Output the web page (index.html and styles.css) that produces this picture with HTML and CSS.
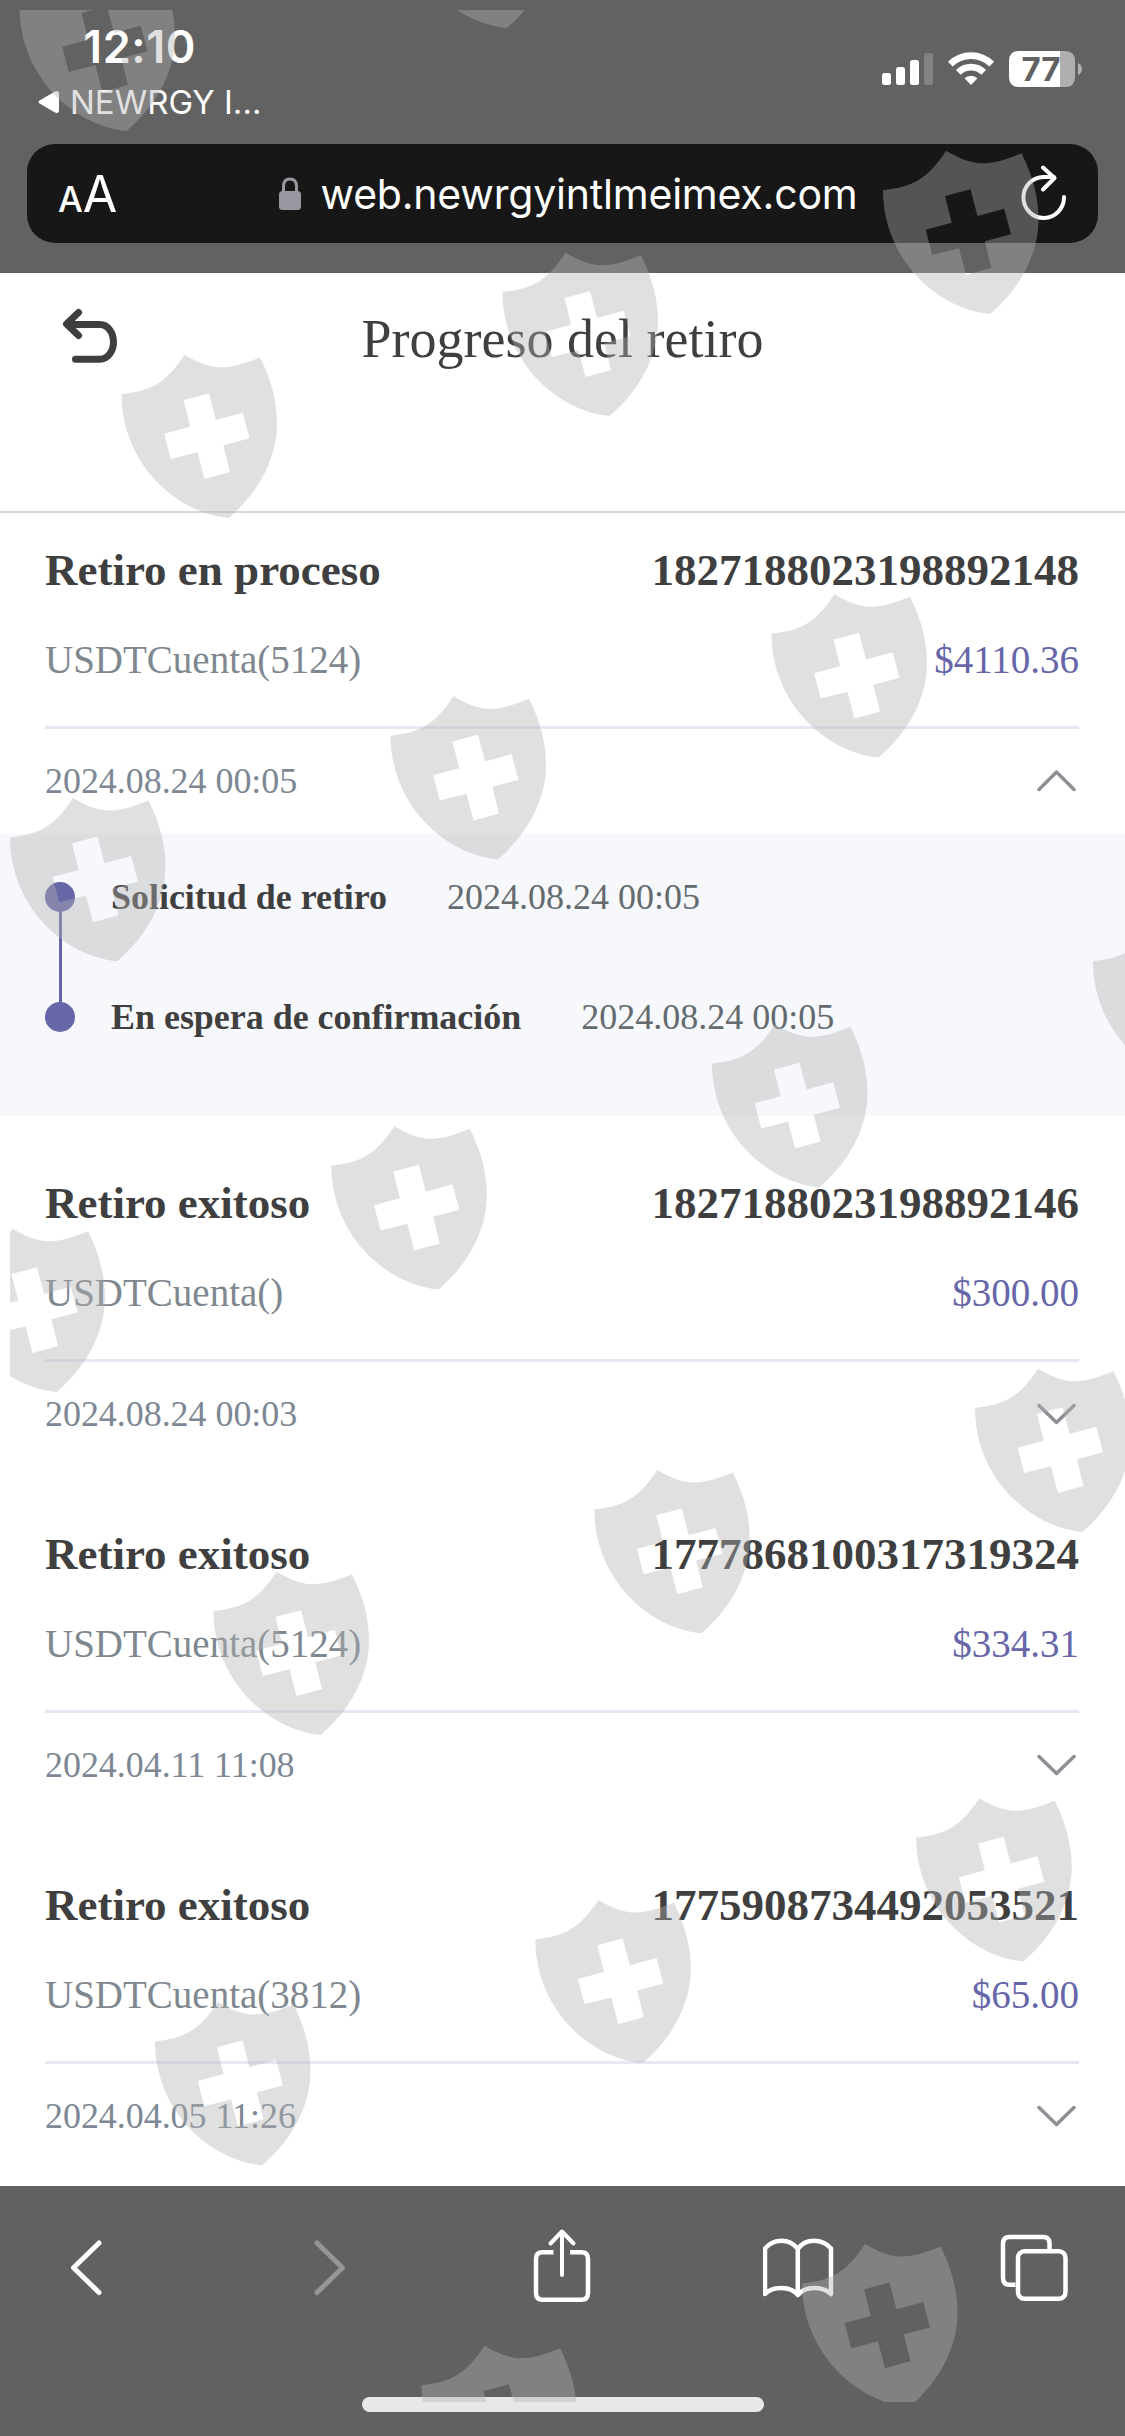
FILE: index.html
```html
<!DOCTYPE html>
<html lang="es">
<head>
<meta charset="utf-8">
<title>Progreso del retiro</title>
<link rel="stylesheet" href="styles.css">
</head>
<body>
<div class="screen">
  <header class="browser-top">
    <div class="status-bar">
      <div class="status-left">
        <div class="clock">12:10</div>
        <div class="back-app">
          <svg class="back-tri" width="21" height="24" viewBox="0 0 21 24"><path d="M2 10.2 17 1.5Q21 0 21 4V20Q21 24 17 22.500L2 13.800Q-1 12 2 10.200Z" fill="#fff"/></svg>
          <span>NEWRGY I...</span>
        </div>
      </div>
      <svg class="status-icons" width="202" height="38" viewBox="881 50 202 38">
        <g fill="#fff">
          <rect x="882" y="73" width="9" height="12" rx="2.500"/>
          <rect x="896" y="67" width="9" height="18" rx="2.500"/>
          <rect x="910" y="60" width="9" height="25" rx="2.500"/>
          <rect x="924" y="53" width="9" height="32" rx="2.500" fill="#828282"/>
          <path d="M971 85 964.500 78.200A9.500 9.500 0 0 1 977.500 78.200Z"/>
        </g>
        <path d="M958.300 72.400A18 18 0 0 1 983.700 72.400M950.300 64.200A29.300 29.300 0 0 1 991.700 64.200" fill="none" stroke="#fff" stroke-width="6.600"/>
        <path d="M1019 51H1060V87H1019Q1009 87 1009 77V61Q1009 51 1019 51Z" fill="#fff"/>
        <path d="M1060 51H1065Q1075 51 1075 61V77Q1075 87 1065 87H1060Z" fill="#b0b0b0"/>
        <path d="M1078 63Q1082 65 1082 69T1078 75Z" fill="#b0b0b0"/>
        <text class="battery-text" x="1041" y="81" text-anchor="middle">77</text>
      </svg>
    </div>
    <div class="url-bar">
      <div class="aa"><span class="aa-small">A</span><span class="aa-big">A</span></div>
      <div class="address">
        <svg width="22" height="34" viewBox="0 0 22 34"><path d="M4.500 15V9.500Q4.500 2 11 2T17.500 9.500V15" fill="none" stroke="#97979f" stroke-width="3"/><rect y="14" width="22" height="19" rx="3.500" fill="#97979f"/></svg>
        <span>web.newrgyintlmeimex.com</span>
      </div>
      <svg class="reload" width="50" height="58" viewBox="1020 164 50 58"><path d="M1064 196A20.300 20.500 0 1 1 1043.500 176H1054M1043 166.500 1054.500 177 1043 188.500" fill="none" stroke="#fff" stroke-width="4" stroke-linecap="round" stroke-linejoin="round"/></svg>
    </div>
  </header>

  <main class="page">
    <div class="page-head">
      <svg class="undo" width="58" height="58" viewBox="61 307 58 58"><path d="M78.500 312.500 66.500 324 78.500 335.500M68 324.500H100A13.500 17.400 0 0 1 100 359.300H75.500" fill="none" stroke="#3f3f3f" stroke-width="7" stroke-linecap="round" stroke-linejoin="round"/></svg>
      <h1>Progreso del retiro</h1>
    </div>

    <section class="card card-first">
      <div class="row row-title"><span>Retiro en proceso</span><span>1827188023198892148</span></div>
      <div class="row row-account"><span>USDTCuenta(5124)</span><span class="amount">$4110.36</span></div>
      <div class="row row-date"><span>2024.08.24 00:05</span><svg class="chev" width="40" height="24" viewBox="0 0 40 24"><path d="M3 20.500 20.500 3 38 20.500"/></svg></div>
    </section>
    <div class="timeline">
      <div class="step step-linked"><i class="dot"></i><strong>Solicitud de retiro</strong><span>2024.08.24 00:05</span></div>
      <div class="step"><i class="dot"></i><strong>En espera de confirmación</strong><span>2024.08.24 00:05</span></div>
    </div>

    <section class="card">
      <div class="row row-title"><span>Retiro exitoso</span><span>1827188023198892146</span></div>
      <div class="row row-account"><span>USDTCuenta()</span><span class="amount">$300.00</span></div>
      <div class="row row-date"><span>2024.08.24 00:03</span><svg class="chev" width="40" height="24" viewBox="0 0 40 24"><path d="M3 3.500 20.500 20.500 38 3.500"/></svg></div>
    </section>
    <section class="card">
      <div class="row row-title"><span>Retiro exitoso</span><span>1777868100317319324</span></div>
      <div class="row row-account"><span>USDTCuenta(5124)</span><span class="amount">$334.31</span></div>
      <div class="row row-date"><span>2024.04.11 11:08</span><svg class="chev" width="40" height="24" viewBox="0 0 40 24"><path d="M3 3.500 20.500 20.500 38 3.500"/></svg></div>
    </section>
    <section class="card">
      <div class="row row-title"><span>Retiro exitoso</span><span>1775908734492053521</span></div>
      <div class="row row-account"><span>USDTCuenta(3812)</span><span class="amount">$65.00</span></div>
      <div class="row row-date"><span>2024.04.05 11:26</span><svg class="chev" width="40" height="24" viewBox="0 0 40 24"><path d="M3 3.500 20.500 20.500 38 3.500"/></svg></div>
    </section>
  </main>

  <footer class="browser-bottom">
    <nav class="toolbar">
      <svg width="72" height="80" viewBox="55.500 2228 72 80"><path d="M99.500 2243 74 2267.700 99.500 2292.500" stroke-width="5"/></svg>
      <svg width="72" height="80" viewBox="291.500 2228 72 80"><path d="M317.500 2243 343 2267.700 317.500 2292.500" stroke-width="5" stroke="#969696"/></svg>
      <svg width="72" height="80" viewBox="527.500 2228 72 80"><path d="M554 2252.300H543Q536.500 2252.300 536.500 2259V2293Q536.500 2299.700 543 2299.700H582Q588.500 2299.700 588.500 2293V2259Q588.500 2252.300 582 2252.300H570.500" stroke-linecap="butt"/><path d="M562.500 2275V2232M551 2243.500 562.500 2231.500 574 2243.500" stroke-width="4"/></svg>
      <svg width="72" height="80" viewBox="763.500 2228 72 80"><path d="M798.300 2249Q792 2240.700 782 2240.700T765.500 2248.500V2294Q771 2288 782 2288T798.300 2295Q804 2288 814.500 2288T831.500 2294V2248.500Q825 2240.700 814.500 2240.700T798.300 2249V2294"/></svg>
      <svg width="72" height="80" viewBox="999.500 2228 72 80"><path d="M1016 2284.700H1010Q1003.500 2284.700 1003.500 2278V2243.500Q1003.500 2237 1010 2237H1043.500Q1050 2237 1050 2243.500V2249" stroke-linecap="butt"/><rect x="1018.500" y="2251.300" width="47.500" height="47.500" rx="6.500"/></svg>
    </nav>
    <div class="home-indicator"></div>
  </footer>

  <svg class="watermark" width="1115" height="2392" viewBox="10 10 1115 2392">
    <defs>
      <path id="shield" fill-rule="evenodd" d="M0 0C31-3 45-12 63-39.300C91-23 105-23 138.500-36.700C151-12 155.500 10 155.500 30C155.500 62 139 97 107.200 124C54 119 0 69 0 0ZM62 6 87.500-.700 94.500 26 121.200 18.700 128 44.300 101.800 51.300 108.500 78 83 85 76 58.300 49.200 65 42.700 39.700 68.700 32.700Z"/>
    </defs>
    <g fill="#b1b1b1" fill-opacity=".4">
      <use href="#shield" x="19.500" y="7"/>
      <use href="#shield" x="399.500" y="-96"/>
      <use href="#shield" x="883" y="190"/>
      <use href="#shield" x="502.500" y="292"/>
      <use href="#shield" x="121.500" y="394"/>
      <use href="#shield" x="771.500" y="633.500"/>
      <use href="#shield" x="390.500" y="735.500"/>
      <use href="#shield" x="10" y="837.300"/>
      <use href="#shield" x="1093" y="961"/>
      <use href="#shield" x="712" y="1063.500"/>
      <use href="#shield" x="331.300" y="1165.500"/>
      <use href="#shield" x="-50.500" y="1268"/>
      <use href="#shield" x="975" y="1408"/>
      <use href="#shield" x="594.300" y="1509.300"/>
      <use href="#shield" x="213.500" y="1611"/>
      <use href="#shield" x="916.200" y="1837.500"/>
      <use href="#shield" x="535.300" y="1939.300"/>
      <use href="#shield" x="155" y="2041.300"/>
      <use href="#shield" x="802" y="2283.300"/>
      <use href="#shield" x="421.500" y="2385"/>
    </g>
  </svg>
</div>
</body>
</html>
```
FILE: styles.css
```css
* { box-sizing: border-box; }

body {
  margin: 0;
  background: #fff;
}

.screen {
  position: relative;
  display: flex;
  flex-direction: column;
  width: 1125px;
  height: 2436px;
  overflow: hidden;
  font-family: "Liberation Serif", serif;
}

svg { display: block; flex: none; }

/* Browser chrome, top */
.browser-top {
  height: 273px;
  padding: 20px 27px 0;
  background: #626262;
  color: #fff;
  font-family: Inter, "Liberation Sans", sans-serif;
}

.status-bar {
  display: flex;
  justify-content: space-between;
  height: 124px;
}

.clock {
  padding-left: 56px;
  font-size: 45px;
  font-weight: 600;
  letter-spacing: 0.6px;
  line-height: 54px;
}

.back-app {
  display: flex;
  align-items: center;
  gap: 11px;
  padding-left: 11px;
  font-size: 33px;
  line-height: 56px;
}

.status-icons { margin: 30px 15px 0 0; }

.battery-text {
  font-size: 33px;
  font-weight: 700;
  fill: #626262;
}

.url-bar {
  display: flex;
  align-items: center;
  justify-content: space-between;
  height: 99px;
  padding: 0 28px 0 31px;
  border-radius: 28px;
  background: #171717;
}

.aa {
  display: flex;
  align-items: baseline;
  width: 58px;
}

.aa-small { font-size: 35px; font-weight: 500; }
.aa-big { font-size: 50px; }

.address {
  display: flex;
  align-items: center;
  gap: 20px;
  font-size: 41px;
  letter-spacing: -0.2px;
}

/* Page */
.page {
  height: 1913px;
  background: #fff;
  color: #3f3f3f;
}

.page-head {
  display: grid;
  grid-template-columns: 1fr auto 1fr;
  align-items: start;
  height: 240px;
  padding: 34px 61px 0;
  border-bottom: 2px solid #d9d9d9;
}

.page-head h1 {
  margin: 0;
  font-size: 54px;
  font-weight: 400;
  line-height: 64px;
}

.card {
  height: 351px;
  padding: 57px 46px 0 45px;
}

.card-first { height: 321px; padding-top: 27px; }

.row {
  display: flex;
  align-items: center;
  justify-content: space-between;
}

.row-title {
  height: 60px;
  font-size: 45px;
  font-weight: 700;
}

.row-account {
  height: 129px;
  padding-bottom: 8px;
  border-bottom: 3px solid #e6e9f5;
  color: #7f888f;
  font-size: 39px;
}

.amount { color: #6666a8; }

.row-date {
  height: 103px;
  color: #7d8894;
  font-size: 36px;
  letter-spacing: -0.05px;
}

.chev {
  margin-right: 3px;
  fill: none;
  stroke: #8e8e96;
  stroke-width: 3.5;
  stroke-linecap: round;
  stroke-linejoin: round;
}

.timeline {
  height: 282px;
  padding: 33px 45px 0;
  background: #f7f8fc;
}

.step {
  position: relative;
  display: flex;
  align-items: center;
  height: 60px;
  margin-bottom: 60px;
  font-size: 36px;
}

.step strong { margin: 0 60px 0 36px; letter-spacing: -0.03px; }
.step span { color: #636b6f; }

.dot {
  width: 30px;
  height: 30px;
  border-radius: 50%;
  background: #6666a8;
}

/* connector to the next step */
.step-linked::after {
  content: "";
  position: absolute;
  left: 13.500px;
  top: 42px;
  width: 3px;
  height: 96px;
  background: #6666a8;
}

/* Browser chrome, bottom */
.browser-bottom {
  height: 250px;
  padding-top: 42px;
  background: #616161;
}

.toolbar {
  display: flex;
  justify-content: space-between;
  padding: 0 54.500px;
  fill: none;
  stroke: #fff;
  stroke-width: 4.500;
  stroke-linecap: round;
  stroke-linejoin: round;
}

.home-indicator {
  width: 402px;
  height: 15px;
  margin: 89px auto 0;
  border-radius: 8px;
  background: #e8e8e8;
}

/* Shield pattern laid over the whole screen */
.watermark {
  position: absolute;
  left: 10px;
  top: 10px;
  pointer-events: none;
}
```
